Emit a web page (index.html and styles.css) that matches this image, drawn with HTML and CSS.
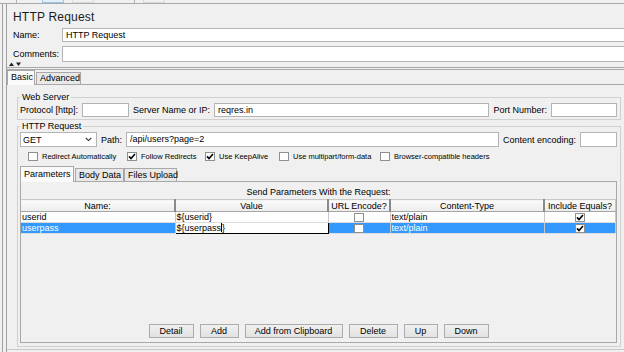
FILE: index.html
```html
<!DOCTYPE html>
<html lang="en">
<head>
    <meta charset="UTF-8">
    <meta name="viewport" content="width=device-width, initial-scale=1.0">
    <title>HTTP Request</title>
    <link rel="stylesheet" href="styles.css">
</head>
<body>
    <!-- Toolbar remnants at the top edge -->
    <div class="toolbar">
        <span class="tool-sep first"></span>
        <span class="tool-btn pressed"></span>
        <span class="tool-btn"></span>
        <span class="tool-sep"></span>
        <span class="tool-btn"></span>
    </div>

    <div class="workspace">
        <div class="editor">
            <div class="editor-title">HTTP Request</div>

            <div class="field-row name-row">
                <label class="field-label">Name:</label>
                <div class="text-input">HTTP Request</div>
            </div>
            <div class="field-row comments-row">
                <label class="field-label">Comments:</label>
                <div class="text-input"></div>
            </div>

            <div class="splitter">
                <svg class="splitter-arrows" width="12" height="5" viewBox="0 0 12 5">
                    <path d="M0 4 L2.5 0.5 L5 4 Z" fill="#222"/>
                    <path d="M7 0.5 L12 0.5 L9.5 4 Z" fill="#222"/>
                </svg>
            </div>

            <!-- Basic / Advanced -->
            <div class="tabs">
                <div class="tab active basic-tab">Basic</div>
                <div class="tab advanced-tab">Advanced</div>
            </div>

            <div class="tab-panel">
                <fieldset class="group web-server">
                    <legend>Web Server</legend>
                    <div class="group-row">
                        <span>Protocol [http]:</span>
                        <div class="text-input protocol-input"></div>
                        <span>Server Name or IP:</span>
                        <div class="text-input grow">reqres.in</div>
                        <span>Port Number:</span>
                        <div class="text-input port-input"></div>
                    </div>
                </fieldset>

                <fieldset class="group http-request">
                    <legend>HTTP Request</legend>
                    <div class="group-row request-row">
                        <div class="select-box">
                            <span>GET</span>
                            <svg width="7" height="5" viewBox="0 0 7 5">
                                <path d="M0.8 1 L3.5 3.6 L6.2 1" stroke="#333" stroke-width="1.1" fill="none"/>
                            </svg>
                        </div>
                        <span>Path:</span>
                        <div class="text-input grow">/api/users?page=2</div>
                        <span>Content encoding:</span>
                        <div class="text-input encoding-input"></div>
                    </div>

                    <div class="check-row">
                        <div class="check-item item-redirect">
                            <span class="check-box"></span>Redirect Automatically
                        </div>
                        <div class="check-item item-follow">
                            <span class="check-box">
                                <svg width="8" height="7" viewBox="0 0 8 7"><path d="M1 3.4 L3 5.5 L7 1" stroke="#000" stroke-width="1.6" fill="none"/></svg>
                            </span>Follow Redirects
                        </div>
                        <div class="check-item item-keepalive">
                            <span class="check-box">
                                <svg width="8" height="7" viewBox="0 0 8 7"><path d="M1 3.4 L3 5.5 L7 1" stroke="#000" stroke-width="1.6" fill="none"/></svg>
                            </span>Use KeepAlive
                        </div>
                        <div class="check-item item-multipart">
                            <span class="check-box"></span>Use multipart/form-data
                        </div>
                        <div class="check-item">
                            <span class="check-box"></span>Browser-compatible headers
                        </div>
                    </div>

                    <!-- Parameters / Body Data / Files Upload -->
                    <div class="tabs inner-tabs">
                        <div class="tab active params-tab">Parameters</div>
                        <div class="tab body-tab">Body Data</div>
                        <div class="tab files-tab">Files Upload</div>
                    </div>

                    <div class="params-panel">
                        <div class="params-title">Send Parameters With the Request:</div>
                        <table class="params-table">
                            <colgroup>
                                <col class="col-name">
                                <col class="col-value">
                                <col class="col-encode">
                                <col class="col-type">
                                <col class="col-equals">
                            </colgroup>
                            <thead>
                                <tr>
                                    <th>Name:</th>
                                    <th>Value</th>
                                    <th>URL Encode?</th>
                                    <th>Content-Type</th>
                                    <th>Include Equals?</th>
                                </tr>
                            </thead>
                            <tbody>
                                <tr>
                                    <td>userid</td>
                                    <td>${userid}</td>
                                    <td class="center"><span class="cell-box"></span></td>
                                    <td>text/plain</td>
                                    <td class="center">
                                        <span class="cell-box">
                                            <svg width="8" height="7" viewBox="0 0 8 7"><path d="M1 3.4 L3 5.5 L7 1" stroke="#000" stroke-width="1.6" fill="none"/></svg>
                                        </span>
                                    </td>
                                </tr>
                                <tr class="selected">
                                    <td>userpass</td>
                                    <td class="editing">${userpass<span class="caret"></span>}</td>
                                    <td class="center"><span class="cell-box"></span></td>
                                    <td>text/plain</td>
                                    <td class="center">
                                        <span class="cell-box">
                                            <svg width="8" height="7" viewBox="0 0 8 7"><path d="M1 3.4 L3 5.5 L7 1" stroke="#000" stroke-width="1.6" fill="none"/></svg>
                                        </span>
                                    </td>
                                </tr>
                            </tbody>
                        </table>

                        <div class="button-row">
                            <button class="btn btn-detail">Detail</button>
                            <button class="btn btn-add">Add</button>
                            <button class="btn btn-clipboard">Add from Clipboard</button>
                            <button class="btn btn-delete">Delete</button>
                            <button class="btn btn-up">Up</button>
                            <button class="btn btn-down">Down</button>
                        </div>
                    </div>
                </fieldset>
            </div>
        </div>
    </div>
</body>
</html>
```

FILE: styles.css
```css
/* JMeter style HTTP Request sampler */

* {
    box-sizing: border-box;
}

body {
    margin: 0;
    width: 624px;
    height: 352px;
    overflow: hidden;
    background: #f0f0f0;
    font-family: "Liberation Sans", Arial, sans-serif;
    font-size: 9px;
    color: #000;
}

/* Toolbar strip */
.toolbar {
    height: 4px;
    border-bottom: 1px solid #a9a9a9;
    display: flex;
}

.tool-sep {
    width: 1px;
    height: 3px;
    background: #b4b4b4;
    margin-left: 40px;
}

.tool-sep.first {
    margin-left: 16px;
}

.tool-btn {
    width: 22px;
    height: 3px;
    margin-left: 8px;
    border: 1px solid #dadada;
    border-top: none;
}

.tool-btn.pressed {
    margin-left: 25px;
    border-color: #9cc4e4;
    background: #e2eef8;
}

/* Frame */
.workspace {
    margin-left: 2px;
    border-left: 1px solid #a0a0a0;
    padding-left: 3px;
    height: 348px;
}

.editor {
    border-left: 1px solid #a0a0a0;
    height: 100%;
    display: flex;
    flex-direction: column;
}

.editor-title {
    font-size: 12px;
    line-height: 15px;
    letter-spacing: 0.2px;
    color: #1c1c1c;
    padding: 6px 0 3px 6px;
}

.field-row {
    display: flex;
    align-items: center;
    padding-left: 6px;
    margin-right: -8px;
}

.field-label {
    width: 49px;
    flex: none;
}

.text-input {
    background: #fff;
    border: 1px solid #b4b4b4;
    height: 14px;
    line-height: 12px;
    padding: 0 3px;
    white-space: nowrap;
    overflow: hidden;
}

.field-row .text-input {
    flex: 1;
}

.comments-row {
    margin-top: 4px;
}

.comments-row .text-input {
    height: 16px;
}

.splitter {
    height: 8px;
    border-bottom: 3px double #a8a8a8;
    display: flex;
    align-items: flex-end;
    padding-left: 2px;
}

.splitter-arrows {
    display: block;
}

/* Tabs */
.tabs {
    display: flex;
    align-items: flex-end;
    height: 14px;
}

.tab {
    height: 12px;
    line-height: 11px;
    border: 1px solid #a8a8a8;
    border-bottom: none;
    background: #e8e8e8;
    padding: 0 3px;
    white-space: nowrap;
}

.tab.active {
    height: 15px;
    line-height: 13px;
    margin-bottom: -1px;
    background: #fafafa;
    position: relative;
}

.basic-tab {
    width: 28px;
}

.advanced-tab {
    width: 45px;
    margin-left: 1px;
}

.tab-panel {
    border-top: 1px solid #a8a8a8;
    border-bottom: 1px solid #c8c8c8;
    padding: 7px 3px 2px 10px;
}

/* Group boxes */
.group {
    margin: 0;
    border: 1px solid #d0d0d0;
    padding: 0 3px 2px 2px;
    min-width: 0;
}

.group legend {
    padding: 0 2px;
    font-size: 9px;
    line-height: 11px;
}

.http-request {
    margin-top: 1px;
    padding-bottom: 3px;
}

.group-row {
    display: flex;
    align-items: center;
    gap: 4px;
    height: 14px;
    white-space: nowrap;
}

.grow {
    flex: 1;
}

.protocol-input {
    width: 47px;
}

.port-input {
    width: 66px;
}

.request-row {
    height: 15px;
}

.request-row .text-input {
    height: 15px;
}

.select-box {
    width: 77px;
    height: 15px;
    background: #fff;
    border: 1px solid #b4b4b4;
    display: flex;
    align-items: center;
    justify-content: space-between;
    padding: 0 4px 0 2px;
}

.encoding-input {
    width: 37px;
}

/* Checkbox row */
.check-row {
    display: flex;
    align-items: center;
    height: 12px;
    margin-top: 3px;
    padding-left: 8px;
    font-size: 7.5px;
    white-space: nowrap;
}

.check-item {
    display: flex;
    align-items: center;
    gap: 4px;
}

.item-redirect {
    width: 99px;
}

.item-follow {
    width: 78px;
}

.item-keepalive {
    width: 74px;
}

.item-multipart {
    width: 101px;
}

.check-box,
.cell-box {
    width: 10px;
    height: 9px;
    background: #fff;
    border: 1px solid #8e8f8f;
    display: flex;
    align-items: center;
    justify-content: center;
}

/* Inner tabs */
.inner-tabs {
    margin-top: 4px;
    height: 15px;
}

.inner-tabs .tab {
    height: 13px;
    line-height: 12px;
}

.inner-tabs .tab.active {
    height: 16px;
    line-height: 15px;
}

.params-tab {
    width: 54px;
}

.body-tab {
    width: 49px;
    margin-left: 1px;
}

.files-tab {
    width: 53px;
}

.params-panel {
    height: 162px;
    border: 1px solid #a8a8a8;
    display: flex;
    flex-direction: column;
}

.params-title {
    text-align: center;
    line-height: 11px;
    padding-top: 5px;
    margin-bottom: 1px;
}

/* Table */
.params-table {
    width: 100%;
    table-layout: fixed;
    border-collapse: collapse;
}

.col-name {
    width: 154px;
}

.col-value {
    width: 153px;
}

.col-encode {
    width: 62px;
}

.col-type {
    width: 154px;
}

.params-table th {
    height: 12px;
    padding: 0;
    font-weight: normal;
    background: linear-gradient(#fbfbfb, #ececec);
    border-top: 1px solid #c8c8c8;
    border-bottom: 1px solid #a5a5a5;
    border-right: 2px solid #8a8a8a;
    line-height: 10px;
}

.params-table th:last-child {
    border-right: 1px solid #c8c8c8;
}

.params-table td {
    height: 11px;
    padding: 0 1px;
    line-height: 9px;
    background: #fff;
    border-right: 1px solid #c8c8c8;
    border-bottom: 1px solid #dcdcdc;
    white-space: nowrap;
    overflow: hidden;
}

.params-table td.center {
    padding: 0;
}

.params-table td.center .cell-box {
    margin: 0 auto;
}

.params-table tr.selected td {
    background: #3399ff;
    color: #fff;
}

.params-table tr.selected td.editing {
    background: #fff;
    color: #000;
    border: 1px solid #000;
}

.caret {
    display: inline-block;
    width: 1px;
    height: 9px;
    background: #000;
    vertical-align: -1px;
}

/* Buttons */
.button-row {
    margin-top: auto;
    display: flex;
    justify-content: center;
    gap: 6px;
    padding-bottom: 4px;
}

.btn {
    height: 14px;
    padding: 0;
    border: 1px solid #acacac;
    background: linear-gradient(#f0f0f0, #e2e2e2);
    font-family: inherit;
    font-size: 9px;
    line-height: 12px;
    color: #000;
}

.btn-detail {
    width: 45px;
}

.btn-add {
    width: 39px;
}

.btn-clipboard {
    width: 98px;
}

.btn-delete {
    width: 49px;
}

.btn-up {
    width: 34px;
}

.btn-down {
    width: 45px;
}
```
